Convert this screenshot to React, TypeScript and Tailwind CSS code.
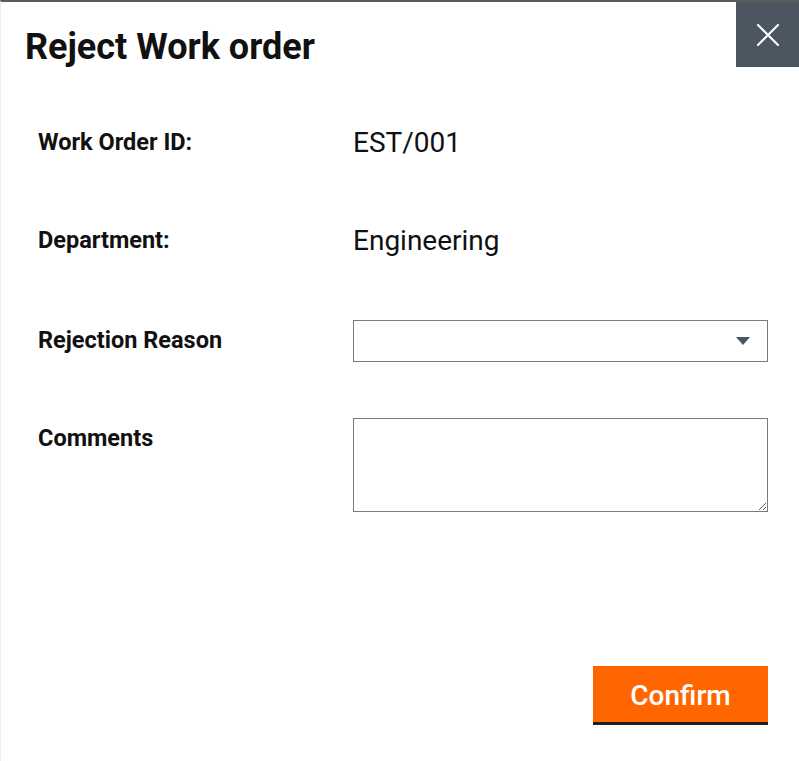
import { X } from "lucide-react";

export default function App() {
  return (
    <div
      className="w-[799px] h-[761px] bg-white border-t-2 border-l border-t-[#5b5b5b] border-l-[#ececec] flex flex-col"
      style={{ fontFamily: "Roboto, 'Liberation Sans', sans-serif" }}
    >
      <header className="flex items-start justify-between">
        <h1 className="ml-[24px] mt-[24px] text-[36px] leading-[42px] font-bold text-[#111]">
          Reject Work order
        </h1>
        <button className="w-[63px] h-[65px] bg-[#4b5660] flex items-center justify-center">
          <X className="w-[40px] h-[40px] text-white" strokeWidth={1.25} />
        </button>
      </header>

      <main className="flex-1 flex flex-col pl-[37px] pr-[31px] pt-[55px] text-[#111]">
        <div className="flex items-center h-[40px]">
          <span className="w-[315px] text-[23.5px] font-bold">Work Order ID:</span>
          <span className="text-[28px]">EST/001</span>
        </div>

        <div className="flex items-center h-[40px] mt-[58px]">
          <span className="w-[315px] text-[23.5px] font-bold">Department:</span>
          <span className="text-[28px]">Engineering</span>
        </div>

        <div className="flex items-center mt-[59px]">
          <span className="w-[315px] text-[23.5px] font-bold">Rejection Reason</span>
          <div className="flex-1 h-[42px] border border-[#7a7a7a] flex items-center justify-end pr-[17px]">
            <svg width="14" height="8" viewBox="0 0 14 8">
              <path d="M0 0h14L7 8z" fill="#4b5660" />
            </svg>
          </div>
        </div>

        <div className="flex items-start mt-[56px]">
          <span className="w-[315px] h-[42px] flex items-center text-[23.5px] font-bold">
            Comments
          </span>
          <textarea className="flex-1 h-[94px] border border-[#7a7a7a] outline-none resize-y" />
        </div>

        <div className="flex justify-end mt-auto mb-[36px]">
          <button className="w-[175px] h-[59px] pt-[3px] bg-[#ff6600] border-b-[3px] border-[#1f1f1f] text-white text-[28px] font-medium">
            Confirm
          </button>
        </div>
      </main>
    </div>
  );
}
